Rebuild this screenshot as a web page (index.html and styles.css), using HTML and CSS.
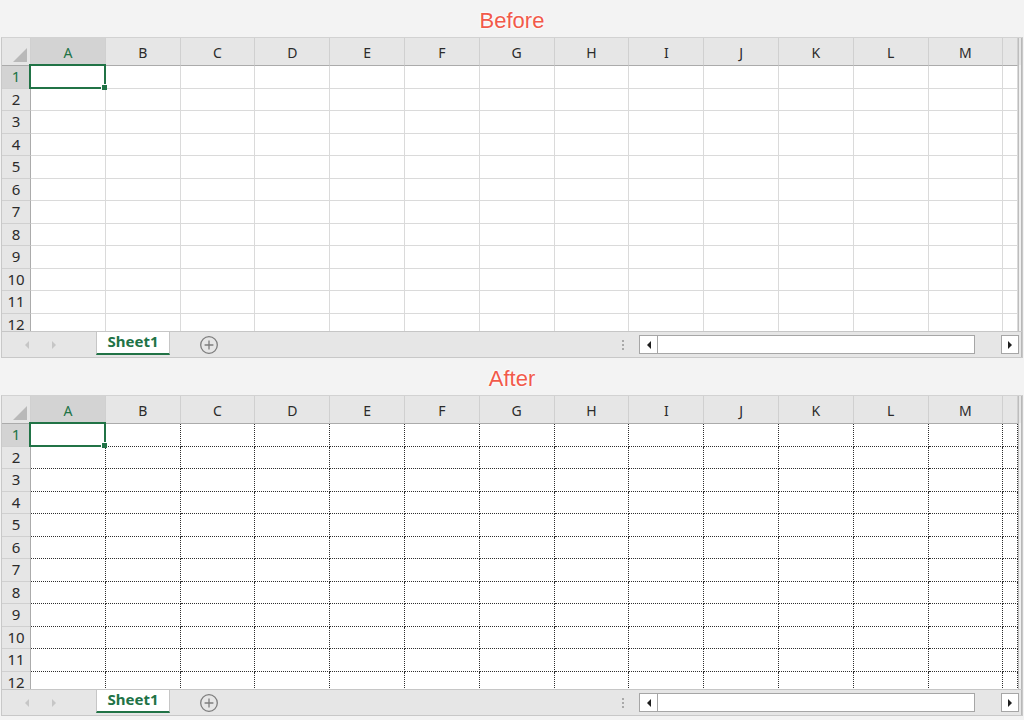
FILE: index.html
```html
<!DOCTYPE html>
<html lang="en">
<head>
    <meta charset="UTF-8">
    <meta name="viewport" content="width=device-width, initial-scale=1.0">
    <title>Gridlines before and after</title>
    <link rel="stylesheet" href="styles.css">
</head>
<body>

    <div class="caption">Before</div>
    <div class="sheet">
        <div class="sheet-body">
            <div class="grid"></div>
            <div class="vscroll"></div>
        </div>
        <div class="tabbar">
            <div class="tab-nav"><span class="nav-left"></span><span class="nav-right"></span></div>
            <div class="tab">Sheet1</div>
            <div class="tab-add">
                <svg width="20" height="20" viewBox="0 0 20 20"><circle cx="10" cy="10" r="8.3" fill="none" stroke="#7d7d7d" stroke-width="1.3"/><path d="M10 5.6v8.8M5.6 10h8.8" stroke="#7d7d7d" stroke-width="1.3"/></svg>
            </div>
            <div class="grip"><i></i><i></i><i></i></div>
            <div class="hscroll">
                <div class="sb-btn"><span class="tri-left"></span></div>
                <div class="sb-thumb"></div>
                <div class="sb-track"></div>
                <div class="sb-btn sb-btn-right"><span class="tri-right"></span></div>
            </div>
            <div class="corner-strip"></div>
        </div>
    </div>

    <div class="caption">After</div>
    <div class="sheet sheet-print">
        <div class="sheet-body">
            <div class="grid"></div>
            <div class="vscroll"></div>
        </div>
        <div class="tabbar">
            <div class="tab-nav"><span class="nav-left"></span><span class="nav-right"></span></div>
            <div class="tab">Sheet1</div>
            <div class="tab-add">
                <svg width="20" height="20" viewBox="0 0 20 20"><circle cx="10" cy="10" r="8.3" fill="none" stroke="#7d7d7d" stroke-width="1.3"/><path d="M10 5.6v8.8M5.6 10h8.8" stroke="#7d7d7d" stroke-width="1.3"/></svg>
            </div>
            <div class="grip"><i></i><i></i><i></i></div>
            <div class="hscroll">
                <div class="sb-btn"><span class="tri-left"></span></div>
                <div class="sb-thumb"></div>
                <div class="sb-track"></div>
                <div class="sb-btn sb-btn-right"><span class="tri-right"></span></div>
            </div>
            <div class="corner-strip"></div>
        </div>
    </div>

    <script>
        document.querySelectorAll('.grid').forEach(grid => {
            const cols = ['A', 'B', 'C', 'D', 'E', 'F', 'G', 'H', 'I', 'J', 'K', 'L', 'M', ''];
            let html = '<div class="corner"></div>';
            cols.forEach((c, i) => {
                html += `<div class="col-head${i === 0 ? ' is-active' : ''}">${c}</div>`;
            });
            for (let r = 1; r <= 12; r++) {
                html += `<div class="row-head${r === 1 ? ' is-active' : ''}">${r}</div>`;
                cols.forEach((c, i) => {
                    html += `<div class="cell${r === 1 && i === 0 ? ' is-selected' : ''}"></div>`;
                });
            }
            grid.innerHTML = html;
        });
    </script>
</body>
</html>
```

FILE: styles.css
```css
:root {
    --fondo: #f3f3f3;
    --cabecera: #e6e6e6;
    --cabecera-activa: #d3d3d3;
    --borde: #c8c8c8;
    --borde-fuerte: #ababab;
    --separador: #d0d0d0;
    --rejilla: #dadada;
    --verde: #217346;
    --rojo: #f15a4b;
    --fuente: "Noto Sans", "Open Sans", sans-serif;
}

* {
    margin: 0; padding: 0; box-sizing: border-box;
}

body {
    background: var(--fondo);
    font-family: var(--fuente);
    color: #2b2b2b;
}

.caption {
    height: 37px; padding-top: 4px;
    display: flex; justify-content: center; align-items: center;
    font-family: "Liberation Sans", Arial, sans-serif;
    font-size: 22px; color: var(--rojo);
    text-shadow: 0 0 2px #fff, 0 0 2px #fff, 0 0 3px #fff;
}

.sheet {
    width: 1022px; margin-left: 1px;
    border: 1px solid var(--borde);
    border-top-color: #d2d2d2;
    background: #fff;
}

.sheet-body { display: flex; height: 293px; }

.grid {
    flex: 1;
    display: grid;
    grid-template-columns: 29px repeat(13, 74.8px) 1fr;
    grid-template-rows: 28px repeat(6, 23px 22px);
    overflow: hidden;
    border-right: 1px solid #bdbdbd;
}

.vscroll {
    width: 3px;
    background: linear-gradient(var(--cabecera) 27px, #f0f0f0 27px);
    border-right: 1px solid #b8b8b8;
}

/* cabeceras */
.corner, .col-head, .row-head { background: var(--cabecera); }

.corner {
    position: relative;
    border-right: 1px solid var(--separador);
    border-bottom: 1px solid var(--borde-fuerte);
}
.corner::after {
    content: ''; position: absolute;
    right: 3px; bottom: 3px; width: 14px; height: 14px;
    background: #b9b9b9;
    clip-path: polygon(100% 0, 100% 100%, 0 100%);
}

.col-head {
    display: flex; justify-content: center; align-items: center;
    font-size: 14px; padding-top: 2px;
    border-right: 1px solid var(--separador);
    border-bottom: 1px solid var(--borde-fuerte);
}

.row-head {
    display: flex; justify-content: center; align-items: center;
    font-size: 15px; padding-bottom: 2px;
    border-right: 1px solid var(--borde-fuerte);
    border-bottom: 1px solid var(--separador);
}

.col-head.is-active, .row-head.is-active {
    background: var(--cabecera-activa);
    color: var(--verde);
}

/* celdas */
.cell {
    border-right: 1px solid var(--rejilla);
    border-bottom: 1px solid var(--rejilla);
}

.sheet-print .cell {
    border-right: 1px dotted #2e2e2e;
    border-bottom: 1px dotted #2e2e2e;
}

.cell.is-selected { position: relative; z-index: 2; }
.cell.is-selected::after {
    content: ''; position: absolute;
    top: -2px; left: -2px; right: -1px; bottom: -1px;
    border: 2px solid var(--verde);
}
.cell.is-selected::before {
    content: ''; position: absolute; z-index: 1;
    right: -2px; bottom: -2px; width: 5px; height: 5px;
    background: var(--verde);
    border-left: 1px solid #fff; border-top: 1px solid #fff;
}

/* barra de hojas */
.tabbar {
    display: flex; height: 26px;
    border-top: 1px solid #c6c6c6;
    background: var(--cabecera);
}

.tab-nav { width: 94px; display: flex; align-items: center; padding-top: 1px; }
.nav-left {
    margin-left: 23px;
    border-right: 4px solid #c6c6c6;
    border-top: 4px solid transparent; border-bottom: 4px solid transparent;
}
.nav-right {
    margin-left: 23px;
    border-left: 4px solid #c6c6c6;
    border-top: 4px solid transparent; border-bottom: 4px solid transparent;
}

.tab {
    width: 74px; height: 23px; padding-bottom: 3px;
    background: #fff;
    border-left: 1px solid #c6c6c6; border-right: 1px solid #c6c6c6;
    border-bottom: 2px solid var(--verde);
    color: var(--verde);
    font-size: 15px; font-weight: 700;
    display: flex; justify-content: center; align-items: center;
}

.tab-add { flex: 1; display: flex; align-items: center; padding-left: 29px; padding-top: 1px; }
.tab-add svg { display: block; }

.grip {
    width: 19px; padding-left: 2px;
    display: flex; flex-direction: column; justify-content: center; gap: 2px;
}
.grip i { display: block; width: 2px; height: 2px; background: #a9a9a9; }

.hscroll { width: 380px; height: 19px; margin-top: 3px; display: flex; }

.sb-btn {
    width: 19px; height: 19px;
    border: 1px solid #a6a6a6; background: #fff;
    display: flex; justify-content: center; align-items: center;
}
.sb-btn-right { width: 18px; }
.tri-left {
    border-right: 4px solid #1e1e1e;
    border-top: 4px solid transparent; border-bottom: 4px solid transparent;
}
.tri-right {
    border-left: 4px solid #1e1e1e;
    border-top: 4px solid transparent; border-bottom: 4px solid transparent;
}

.sb-thumb {
    width: 318px; margin-left: -1px;
    border: 1px solid #a6a6a6; background: #fff;
}
.sb-track { flex: 1; }

.corner-strip { width: 3px; border-right: 1px solid #b8b8b8; }
```
